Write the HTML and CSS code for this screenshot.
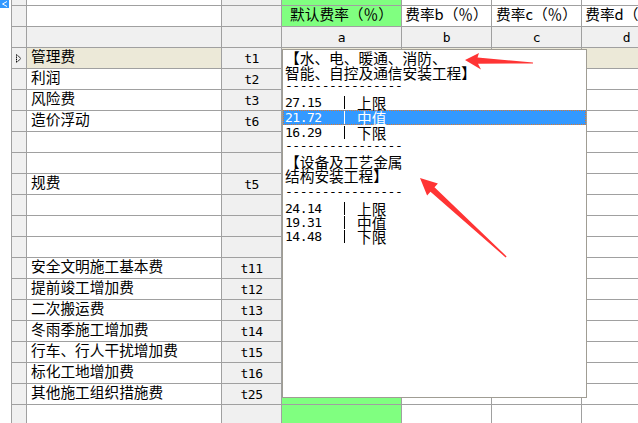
FILE: index.html
```html
<!DOCTYPE html>
<html lang="zh-CN">
<head>
<meta charset="utf-8">
<title>费率</title>
<link rel="stylesheet" href="styles.css">
</head>
<body>
<div class="app">
  <div class="gutter">
    <svg class="tab-mark" width="9" height="8" viewBox="0 0 9 8"><rect width="9" height="8" fill="#3399ff"/><polyline points="7,1.5 2.5,4 7,6.5" fill="none" stroke="#fff" stroke-width="1"/></svg>
  </div>
  <div class="sheet">
    <div class="c ind"></div><div class="c nm"></div><div class="c cd"></div><div class="c ga"></div><div class="c w"></div><div class="c w"></div><div class="c w"></div>

    <div class="c ind"></div><div class="c nm"></div><div class="c cd"></div><div class="c ga hdr">默认费率（％）</div><div class="c w hdr">费率b（％）</div><div class="c w hdr">费率c（％）</div><div class="c w hdr">费率d（％）</div>

    <div class="c ind"></div><div class="c hd"></div><div class="c hd"></div><div class="c hd">a</div><div class="c hd">b</div><div class="c hd">c</div><div class="c hd">d</div>

    <div class="c ind cur-ind"><svg width="6" height="9" viewBox="0 0 6 9"><polygon points="0.5,0.5 5,4.5 0.5,8.5" fill="none" stroke="#000" stroke-width="1" stroke-dasharray="1.2 0.6"/></svg></div><div class="c nm cur">管理费</div><div class="c cd">t1</div><div class="c cur"></div><div class="c cur"></div><div class="c cur"></div><div class="c cur"></div>

    <div class="c ind"></div><div class="c nm">利润</div><div class="c cd">t2</div><div class="c ga"></div><div class="c w"></div><div class="c w"></div><div class="c w"></div>
    <div class="c ind"></div><div class="c nm">风险费</div><div class="c cd">t3</div><div class="c ga"></div><div class="c w"></div><div class="c w"></div><div class="c w"></div>
    <div class="c ind"></div><div class="c nm">造价浮动</div><div class="c cd">t6</div><div class="c ga"></div><div class="c w"></div><div class="c w"></div><div class="c w"></div>
    <div class="c ind"></div><div class="c nm"></div><div class="c cd"></div><div class="c ga"></div><div class="c w"></div><div class="c w"></div><div class="c w"></div>
    <div class="c ind"></div><div class="c nm"></div><div class="c cd"></div><div class="c ga"></div><div class="c w"></div><div class="c w"></div><div class="c w"></div>
    <div class="c ind"></div><div class="c nm">规费</div><div class="c cd">t5</div><div class="c ga"></div><div class="c w"></div><div class="c w"></div><div class="c w"></div>
    <div class="c ind"></div><div class="c nm"></div><div class="c cd"></div><div class="c ga"></div><div class="c w"></div><div class="c w"></div><div class="c w"></div>
    <div class="c ind"></div><div class="c nm"></div><div class="c cd"></div><div class="c ga"></div><div class="c w"></div><div class="c w"></div><div class="c w"></div>
    <div class="c ind"></div><div class="c nm"></div><div class="c cd"></div><div class="c ga"></div><div class="c w"></div><div class="c w"></div><div class="c w"></div>
    <div class="c ind"></div><div class="c nm">安全文明施工基本费</div><div class="c cd">t11</div><div class="c ga"></div><div class="c w"></div><div class="c w"></div><div class="c w"></div>
    <div class="c ind"></div><div class="c nm">提前竣工增加费</div><div class="c cd">t12</div><div class="c ga"></div><div class="c w"></div><div class="c w"></div><div class="c w"></div>
    <div class="c ind"></div><div class="c nm">二次搬运费</div><div class="c cd">t13</div><div class="c ga"></div><div class="c w"></div><div class="c w"></div><div class="c w"></div>
    <div class="c ind"></div><div class="c nm">冬雨季施工增加费</div><div class="c cd">t14</div><div class="c ga"></div><div class="c w"></div><div class="c w"></div><div class="c w"></div>
    <div class="c ind"></div><div class="c nm">行车、行人干扰增加费</div><div class="c cd">t15</div><div class="c ga"></div><div class="c w"></div><div class="c w"></div><div class="c w"></div>
    <div class="c ind"></div><div class="c nm">标化工地增加费</div><div class="c cd">t16</div><div class="c ga"></div><div class="c w"></div><div class="c w"></div><div class="c w"></div>
    <div class="c ind"></div><div class="c nm">其他施工组织措施费</div><div class="c cd">t25</div><div class="c ga"></div><div class="c w"></div><div class="c w"></div><div class="c w"></div>
    <div class="c ind"></div><div class="c nm"></div><div class="c cd"></div><div class="c ga"></div><div class="c w"></div><div class="c w"></div><div class="c w"></div>
  </div>

  <div class="popup">
    <div class="ttl">【水、电、暖通、消防、<br>智能、自控及通信安装工程】</div>
    <div class="dash d1">----------------</div>
    <div class="opt"><span class="num">27.15</span><span class="bar"></span><span class="lbl">上限</span></div>
    <div class="opt sel"><span class="num">21.72</span><span class="bar"></span><span class="lbl">中值</span></div>
    <div class="opt"><span class="num">16.29</span><span class="bar"></span><span class="lbl">下限</span></div>
    <div class="dash d2">----------------</div>
    <div class="ttl ttl2">【设备及工艺金属<br>结构安装工程】</div>
    <div class="dash d3">----------------</div>
    <div class="opt tight"><span class="num">24.14</span><span class="bar"></span><span class="lbl">上限</span></div>
    <div class="opt tight"><span class="num">19.31</span><span class="bar"></span><span class="lbl">中值</span></div>
    <div class="opt tight"><span class="num">14.48</span><span class="bar"></span><span class="lbl">下限</span></div>
  </div>

  <svg class="arrows" width="638" height="423" viewBox="0 0 638 423">
    <polygon points="465,60 479,53 477.5,57.6 533,62.6 533,63.4 478,63.8 481,69.5" fill="#ff3434"/>
    <polygon points="420,178 437.9,183.6 434.5,187.3 506.6,256.4 505.6,257.4 430.5,191.7 427.1,195.4" fill="#ff3434"/>
  </svg>
</div>
</body>
</html>
```

FILE: styles.css
```css
html, body {
  margin: 0;
  padding: 0;
  background: #fff;
  overflow: hidden;
}

.app {
  position: relative;
  width: 638px;
  height: 423px;
  overflow: hidden;
  display: flex;
  font-family: "Noto Sans CJK SC", "Noto Sans", sans-serif;
  color: #000;
}

.gutter {
  width: 11px;
  flex: none;
  position: relative;
}

.tab-mark {
  display: block;
}

.sheet {
  flex: none;
  display: grid;
  grid-template-columns: 15px 195px 60px 120px 90px 90px 90px;
  grid-template-rows: 6px;
  grid-auto-rows: 21px;
  align-content: start;
  border-left: 1px solid #a0a0a0;
}

.c {
  box-sizing: border-box;
  border-right: 1px solid #a0a0a0;
  border-bottom: 1px solid #a0a0a0;
  white-space: nowrap;
  font-size: 14.7px;
  line-height: 16px;
}

.ind { background: #f0f0f0; }
.cur-ind {
  display: flex;
  align-items: center;
  padding-left: 4px;
  padding-top: 1px;
}
.cur-ind svg { display: block; }

.nm {
  background: #fff;
  padding-left: 4px;
}

.cd, .hd {
  background: #f0f0f0;
  text-align: center;
  font-family: "DejaVu Sans Mono", monospace;
  font-size: 13px;
  letter-spacing: -0.5px;
  line-height: 21px;
}

.ga { background: #80ff80; }
.w { background: #fff; }
.cur { background: #ece9d8; }

.hdr {
  text-align: center;
}

/* dropdown list */
.popup {
  position: absolute;
  left: 282px;
  top: 49px;
  width: 305px;
  height: 349px;
  box-sizing: border-box;
  border: 1px solid #a09d94;
  background: #fff;
  overflow: hidden;
}

.ttl {
  padding-left: 2px;
  font-size: 14.7px;
  line-height: 15px;
  white-space: nowrap;
}
.ttl2 { line-height: 14px; }

.dash {
  padding-left: 2px;
  font-family: "DejaVu Sans Mono", monospace;
  font-size: 13px;
  letter-spacing: -0.5px;
  line-height: 12px;
  white-space: nowrap;
  box-sizing: border-box;
}
.d1 { height: 15px; }
.d2 { height: 15px; }
.d3 { height: 18px; line-height: 17px; }

.opt {
  display: flex;
  align-items: center;
  height: 15px;
  padding-left: 2px;
  box-sizing: border-box;
}
.opt.tight { height: 14px; }

.opt.sel {
  background: #3399ff;
  color: #fff;
  border: 1px dotted #e0782c;
  padding-left: 1px;
}

.num {
  width: 59px;
  flex: none;
  font-family: "DejaVu Sans Mono", monospace;
  font-size: 13px;
  letter-spacing: -0.5px;
}

.bar {
  width: 1px;
  height: 13px;
  flex: none;
  background: currentColor;
  margin-right: 12px;
}

.lbl {
  font-size: 14.7px;
  line-height: 15px;
}

.arrows {
  position: absolute;
  left: 0;
  top: 0;
  pointer-events: none;
}
```
